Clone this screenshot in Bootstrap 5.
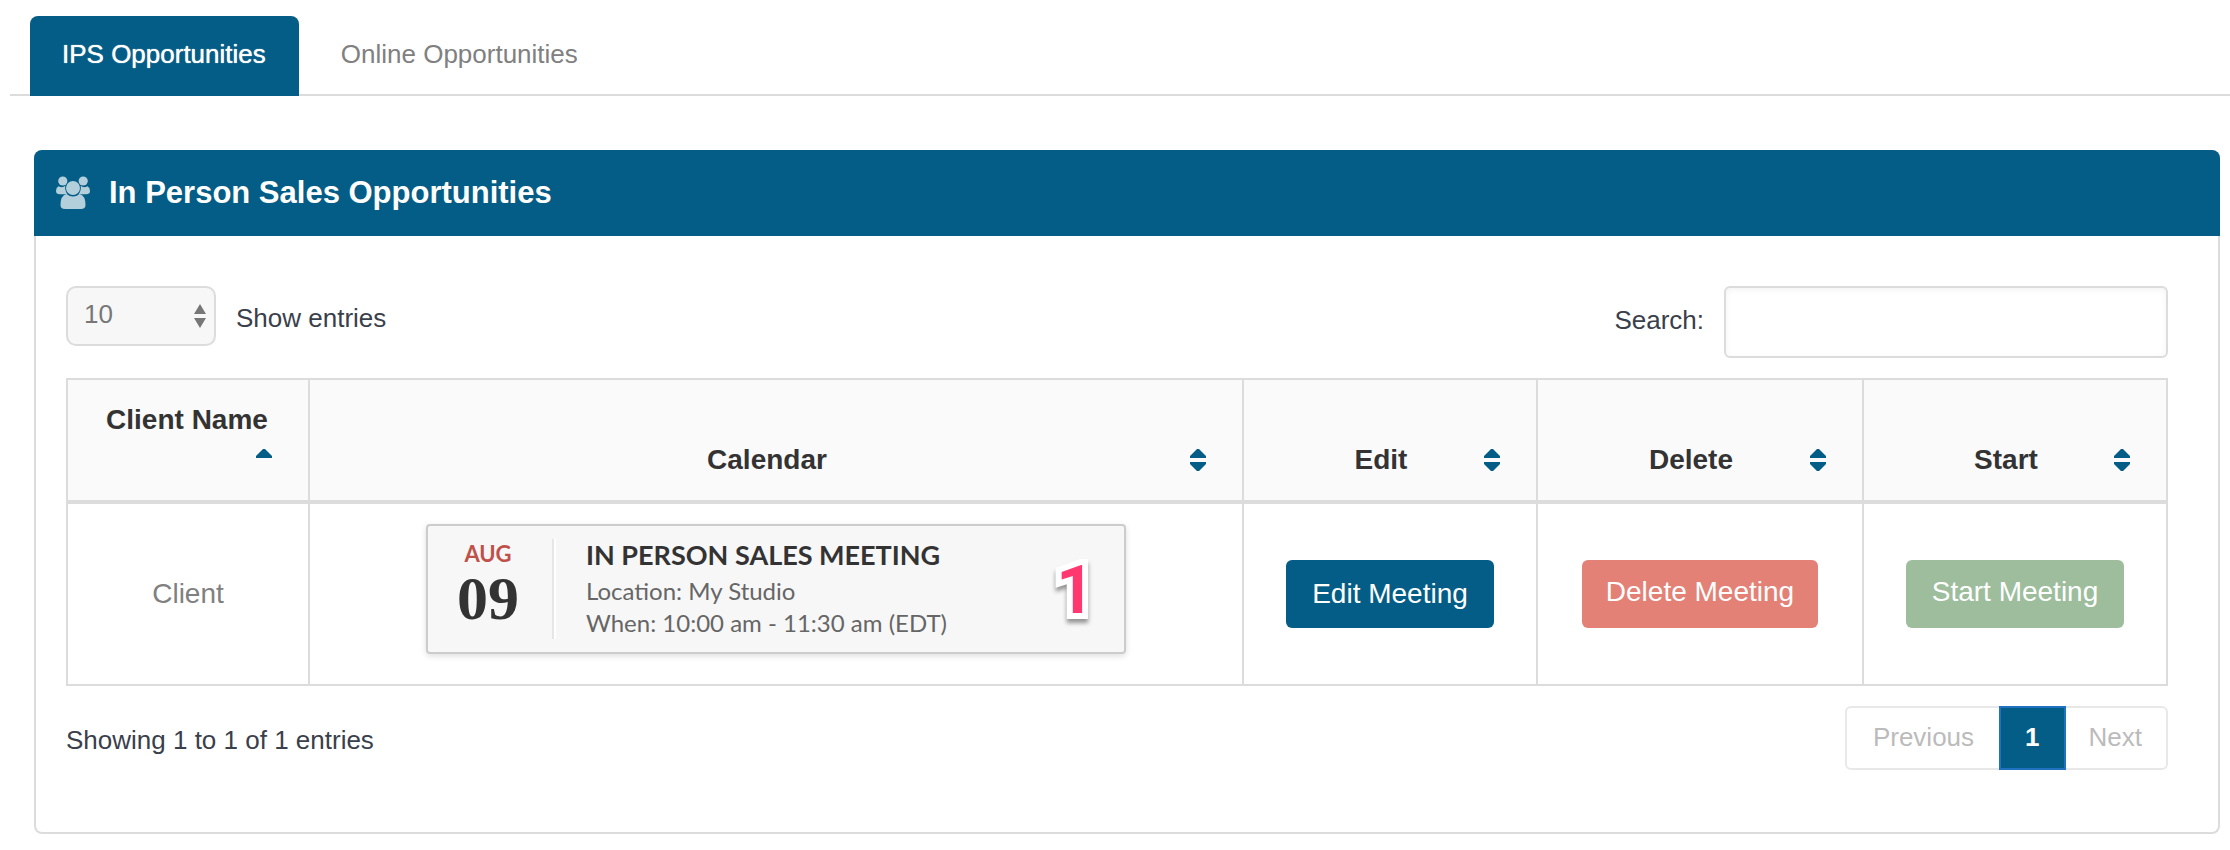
<!DOCTYPE html>
<html lang="en">
<head>
<meta charset="utf-8">
<meta name="viewport" content="width=device-width, initial-scale=1">
<title>Opportunities</title>
<link href="https://cdn.jsdelivr.net/npm/bootstrap@5.3.0/dist/css/bootstrap.min.css" rel="stylesheet">
<style>
:root{--brand:#045d86;--line:#dcdcdc}
body{font:400 26px/40px "Liberation Sans",Arial,sans-serif;color:#3a404b;background:#fff;padding:16px 0 16px 10px}
.nav-tabs{--bs-nav-tabs-border-width:2px;--bs-nav-tabs-border-color:var(--line);padding-left:20px}
.nav-tabs .nav-link{border:0;border-radius:8px 8px 0 0;padding:18px 33px 22px 32px;height:80px;margin-bottom:-2px;color:#808080}
.nav-tabs .nav-link.active{background:var(--brand);color:#fff;text-shadow:0 0 1px #fff}
.nav-tabs .nav-item + .nav-item{margin-left:10px}
.panel{margin:54px 10px 0 24px;border:2px solid var(--line);border-top:0;border-radius:8px}
.panel .card-header{background:var(--brand);color:#fff;margin:0 -2px;border:0;border-radius:8px 8px 0 0;height:86px;padding:0 22px;gap:19px}
.panel h1{font-size:31px;line-height:40px;font-weight:700;margin:0}
.panel .card-body{padding:50px 50px 62px 30px}
.len-select{width:150px;height:60px;border:2px solid var(--line);border-radius:10px;background-color:#f7f7f7;color:#777;font-size:26px;line-height:36px;padding:8px 40px 12px 16px;background-size:12px 24px;background-position:right 8px center;background-image:url("data:image/svg+xml,%3Csvg xmlns='http://www.w3.org/2000/svg' viewBox='0 0 12 24'%3E%3Cpath fill='%23777' d='M6 0l6 10H0zM0 14h12L6 24z'/%3E%3C/svg%3E")}
.search-box{width:444px;height:72px;border:2px solid var(--line);border-radius:6px;box-shadow:inset 0 2px 6px #0000000d;font-size:26px}
.opps{border-collapse:collapse;color:#808080;font-size:28px;margin:20px 0;text-align:center;table-layout:fixed;min-width:1900px}
.opps > :not(caption) > *{border:0}
.opps > :not(caption) > * > *{border:2px solid var(--line);padding:20px 20px 30px;vertical-align:middle;background:transparent;color:inherit}
.opps > thead > tr > th{background:#fafafa;color:#333;vertical-align:bottom;border-bottom:4px solid var(--line);padding:20px 36px 20px 34px}
.opps > tbody > tr > .acts{padding:20px 10px}
.sorter{border:0;background:none;padding:0;width:100%;font-weight:700;color:inherit}
.sorter svg{width:16px;height:40px;fill:var(--brand)}
.col-name{width:242px}.col-edit{width:294px}.col-del{width:326px}.col-start{width:304px}
.opps .btn{--bs-btn-color:#fff;--bs-btn-hover-color:#fff;border:0;border-radius:6px;height:68px;font-size:28px;line-height:40px;padding:14px 26px;white-space:nowrap}
.btn-edit{--bs-btn-bg:var(--brand);--bs-btn-hover-bg:#034a6b}
.opps .btn-del{--bs-btn-bg:#e48176;--bs-btn-hover-bg:#d9695d;padding:12px 24px 16px}
.opps .btn-start{--bs-btn-bg:#9dbd9d;--bs-btn-hover-bg:#86ab86;padding:12px 26px 16px}
.event{width:700px;height:130px;border:2px solid #ccc;border-radius:4px;background:#f7f7f7;box-shadow:0 2px 6px #0002;font-family:Lato,sans-serif;text-align:left;color:#666;font-size:24px;line-height:32px;padding:10px 30px 10px 0}
.event-date{width:126px;padding-right:4px;border-right:2px solid #e6e6e6;box-shadow:2px 0 #fff;height:100px;text-align:center}
.event-month{color:#c0504a;font-weight:700;font-size:22px;line-height:30px}
.event-day{color:#333;font:700 62px/58px "Liberation Serif",serif}
.event-title{color:#333;font-weight:700;font-size:27px;line-height:32px}
.marker{font:700 66px/66px Roboto,sans-serif;color:#ff3870;-webkit-text-stroke:12px #fff;paint-order:stroke fill;stroke-linejoin:round;filter:drop-shadow(0 4px 2px #0006)}
.pagination{--bs-pagination-border-width:2px}
.pagination .page-link{font-size:26px;line-height:36px;padding:11px 24px 13px;border:2px solid #e8e8e8;color:#bbb;background:#fff;margin:0}
.pagination .page-item:first-child .page-link{padding-left:26px;padding-right:26px}
.pagination .page-item + .page-item{margin-left:-2px}
.pagination .active .page-link{background:var(--brand);border-color:#1f72c0;color:#fff;font-weight:700}
</style>
</head>
<body>
<ul class="nav nav-tabs">
  <li class="nav-item"><a class="nav-link active" aria-current="page" href="#ips">IPS Opportunities</a></li>
  <li class="nav-item"><a class="nav-link" href="#online">Online Opportunities</a></li>
</ul>

<main class="card panel" id="ips">
  <div class="card-header d-flex align-items-center">
    <svg width="34" height="34" viewBox="0 0 34 34" fill="#b3cfdb" aria-hidden="true">
      <circle cx="6.800" cy="5" r="4.600"/><circle cx="27.200" cy="5" r="4.600"/>
      <path d="M2.500 10.200Q6.500 12.500 9.300 9.800Q8.500 15 11.500 18.200H4Q0 18.200 0 15Q0 11.500 2.500 10.200zM31.500 10.200Q27.500 12.500 24.700 9.800Q25.500 15 22.500 18.200H30Q34 18.200 34 15Q34 11.500 31.500 10.200z"/>
      <circle cx="17" cy="12" r="7"/>
      <path d="M10.500 18Q17 23 23.500 18Q29.500 19.500 29.500 29Q29.500 33 25 33H9Q4.500 33 4.500 29Q4.500 19.500 10.500 18z"/>
    </svg>
    <h1>In Person Sales Opportunities</h1>
  </div>
  <div class="card-body">
    <div class="d-flex justify-content-between align-items-start">
      <div class="d-flex align-items-center">
        <select class="form-select len-select" id="len"><option>10</option><option>25</option><option>50</option></select>
        <label for="len" class="ps-3 ms-1 pt-1">Show entries</label>
      </div>
      <div class="d-flex align-items-center">
        <label for="search" class="pe-3 me-1 pb-1">Search:</label>
        <input type="search" id="search" class="form-control search-box">
      </div>
    </div>

    <table class="table opps">
      <colgroup><col class="col-name"><col><col class="col-edit"><col class="col-del"><col class="col-start"></colgroup>
      <thead>
        <tr>
          <th scope="col" aria-sort="ascending"><button type="button" class="sorter d-flex flex-wrap"><span class="flex-grow-1">Client Name</span><svg class="ms-auto" viewBox="0 0 16 40"><path d="M7 9h2l7 7v2H0v-2z"/></svg></button></th>
          <th scope="col"><button type="button" class="sorter d-flex flex-wrap"><span class="flex-grow-1">Calendar</span><svg viewBox="0 0 16 40"><path d="M7 9h2l7 7v2H0v-2zM0 22h16v2l-7 7H7l-7-7z"/></svg></button></th>
          <th scope="col"><button type="button" class="sorter d-flex flex-wrap"><span class="flex-grow-1">Edit</span><svg viewBox="0 0 16 40"><path d="M7 9h2l7 7v2H0v-2zM0 22h16v2l-7 7H7l-7-7z"/></svg></button></th>
          <th scope="col"><button type="button" class="sorter d-flex flex-wrap"><span class="flex-grow-1">Delete</span><svg viewBox="0 0 16 40"><path d="M7 9h2l7 7v2H0v-2zM0 22h16v2l-7 7H7l-7-7z"/></svg></button></th>
          <th scope="col"><button type="button" class="sorter d-flex flex-wrap"><span class="flex-grow-1">Start</span><svg viewBox="0 0 16 40"><path d="M7 9h2l7 7v2H0v-2zM0 22h16v2l-7 7H7l-7-7z"/></svg></button></th>
        </tr>
      </thead>
      <tbody>
        <tr>
          <td class="acts">Client</td>
          <td>
            <div class="event d-flex align-items-center mx-auto">
              <div class="event-date">
                <div class="event-month">AUG</div>
                <div class="event-day">09</div>
              </div>
              <div class="ps-4 ms-2">
                <div class="event-title mb-1">IN PERSON SALES MEETING</div>
                <div>Location: My Studio</div>
                <div>When: 10:00 am - 11:30 am (EDT)</div>
              </div>
              <div class="marker ms-auto mt-1">1</div>
            </div>
          </td>
          <td class="acts"><button type="button" class="btn btn-edit">Edit Meeting</button></td>
          <td class="acts"><button type="button" class="btn btn-del">Delete Meeting</button></td>
          <td class="acts"><button type="button" class="btn btn-start">Start Meeting</button></td>
        </tr>
      </tbody>
    </table>

    <div class="d-flex justify-content-between align-items-center">
      <div class="pt-1">Showing 1 to 1 of 1 entries</div>
      <nav aria-label="Table pages">
        <ul class="pagination m-0">
          <li class="page-item"><a class="page-link" href="#prev">Previous</a></li>
          <li class="page-item active"><a class="page-link" href="#p1" aria-current="page">1</a></li>
          <li class="page-item"><a class="page-link" href="#next">Next</a></li>
        </ul>
      </nav>
    </div>
  </div>
</main>
<script src="https://cdn.jsdelivr.net/npm/bootstrap@5.3.0/dist/js/bootstrap.bundle.min.js"></script>
</body>
</html>
